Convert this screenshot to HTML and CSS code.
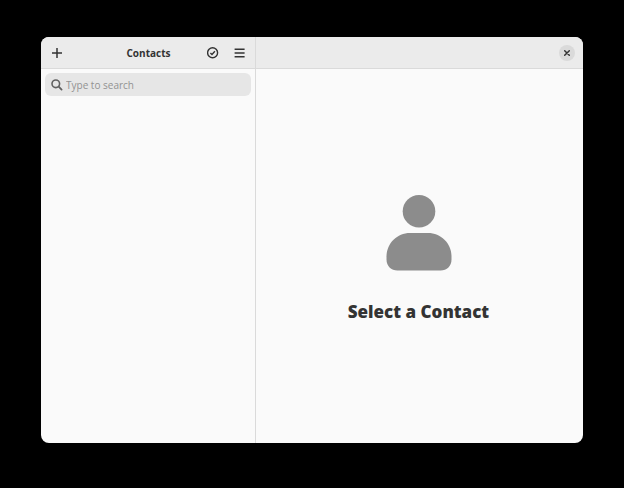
FILE: index.html
```html
<!DOCTYPE html>
<html lang="en">
<head>
  <meta charset="utf-8">
  <meta name="viewport" content="width=device-width, initial-scale=1">
  <title>Contacts</title>
  <link rel="stylesheet" href="styles.css">
</head>
<body>
  <div class="window">
    <aside class="pane sidebar">
      <header class="headerbar">
        <button class="icon-button" type="button" aria-label="Add contact">
          <svg class="icon" viewBox="0 0 12 12" aria-hidden="true"><path d="M6 1v10M1 6h10" fill="none" stroke="currentColor" stroke-width="1.5"/></svg>
        </button>
        <h1 class="title">Contacts</h1>
        <div class="actions">
          <button class="icon-button" type="button" aria-label="Select contacts">
            <svg class="icon" viewBox="0 0 12 12" aria-hidden="true"><circle cx="5.6" cy="5.8" r="5" fill="none" stroke="currentColor" stroke-width="1.4"/><path d="M3.4 5.9l1.6 1.6 2.9-3.2" fill="none" stroke="currentColor" stroke-width="1.4"/></svg>
          </button>
          <button class="icon-button" type="button" aria-label="Main menu">
            <svg class="icon" viewBox="0 0 12 12" aria-hidden="true"><path d="M.6 2.3h10M.6 6h10M.6 9.7h10" fill="none" stroke="currentColor" stroke-width="1.6"/></svg>
          </button>
        </div>
      </header>
      <label class="search">
        <svg class="icon" viewBox="0 0 12 12" aria-hidden="true"><circle cx="4.8" cy="4.8" r="3.8" fill="none" stroke="currentColor" stroke-width="1.6"/><path d="M7.7 7.7l2.9 2.9" fill="none" stroke="currentColor" stroke-width="1.8" stroke-linecap="round"/></svg>
        <input class="search-input" type="text" placeholder="Type to search" aria-label="Type to search">
      </label>
    </aside>
    <main class="pane">
      <header class="headerbar content-bar">
        <button class="close-button" type="button" aria-label="Close">
          <svg class="close-icon" viewBox="0 0 8 8" aria-hidden="true"><path d="M1.7 1.7l4.6 4.6M6.3 1.7L1.7 6.3" fill="none" stroke="currentColor" stroke-width="1.5" stroke-linecap="round"/></svg>
        </button>
      </header>
      <section class="status">
        <svg class="avatar" viewBox="0 0 66 76" aria-hidden="true"><circle cx="33" cy="16.3" r="16.3"/><path d="M24 38H42C55 38 65.5 48.5 65.5 61.5V64.500C65.5 71 61 75.500 54.5 75.500H11.5C5 75.500 .5 71 .5 64.500V61.500C.5 48.500 11 38 24 38Z"/></svg>
        <h2 class="status-title">Select a Contact</h2>
      </section>
    </main>
  </div>
</body>
</html>
```
FILE: styles.css
```css
* {
  box-sizing: border-box;
}

body {
  display: flex;
  min-height: 100vh;
  margin: 0;
  padding: 37px 41px 45px;
  background: #000;
  color: #333;
  font-family: "Open Sans", "Noto Sans", sans-serif;
}

button {
  display: flex;
  align-items: center;
  justify-content: center;
  padding: 0;
  border: 0;
  background: none;
  color: inherit;
}

.window {
  display: grid;
  flex: 1;
  grid-template-columns: 215px 1fr;
  overflow: hidden;
  border-radius: 8px;
  background: #fafafa;
}

.pane {
  display: flex;
  flex-direction: column;
}

.sidebar {
  border-right: 1px solid #dadada;
}

.headerbar {
  display: grid;
  grid-template-columns: 1fr auto 1fr;
  align-items: center;
  height: 32px;
  padding: 0 3px 0 4px;
  border-bottom: 1px solid #dadada;
  background: #ebebeb;
}

.content-bar {
  display: flex;
  justify-content: flex-end;
  padding: 0 8px;
}

.title {
  margin: 0;
  font-size: 10px;
  font-weight: 700;
  line-height: 16px;
}

.icon-button {
  width: 24px;
  height: 24px;
}

.actions {
  display: flex;
  gap: 3px;
  justify-content: flex-end;
}

.icon {
  flex: none;
  width: 12px;
  height: 12px;
}

.close-button {
  width: 16px;
  height: 16px;
  border-radius: 50%;
  background: #dadada;
}

.close-icon {
  width: 8px;
  height: 8px;
}

.search {
  display: flex;
  align-items: center;
  gap: 3px;
  height: 23px;
  margin: 4px;
  padding: 0 6px;
  border-radius: 6px;
  background: #e6e6e6;
  color: #616161;
}

.search-input {
  flex: 1;
  min-width: 0;
  padding: 0;
  border: 0;
  outline: 0;
  background: none;
  color: #333;
  font: 10px/16px "Open Sans", "Noto Sans", sans-serif;
}

.search-input::placeholder {
  color: #929292;
  opacity: 1;
}

.status {
  display: flex;
  flex: 1;
  flex-direction: column;
  align-items: center;
  justify-content: center;
  gap: 29px;
  padding: 6px 2px 0 0;
}

.avatar {
  width: 66px;
  height: 76px;
  fill: #8c8c8c;
}

.status-title {
  margin: 0;
  font-size: 17px;
  font-weight: 800;
  line-height: 24px;
}
```
